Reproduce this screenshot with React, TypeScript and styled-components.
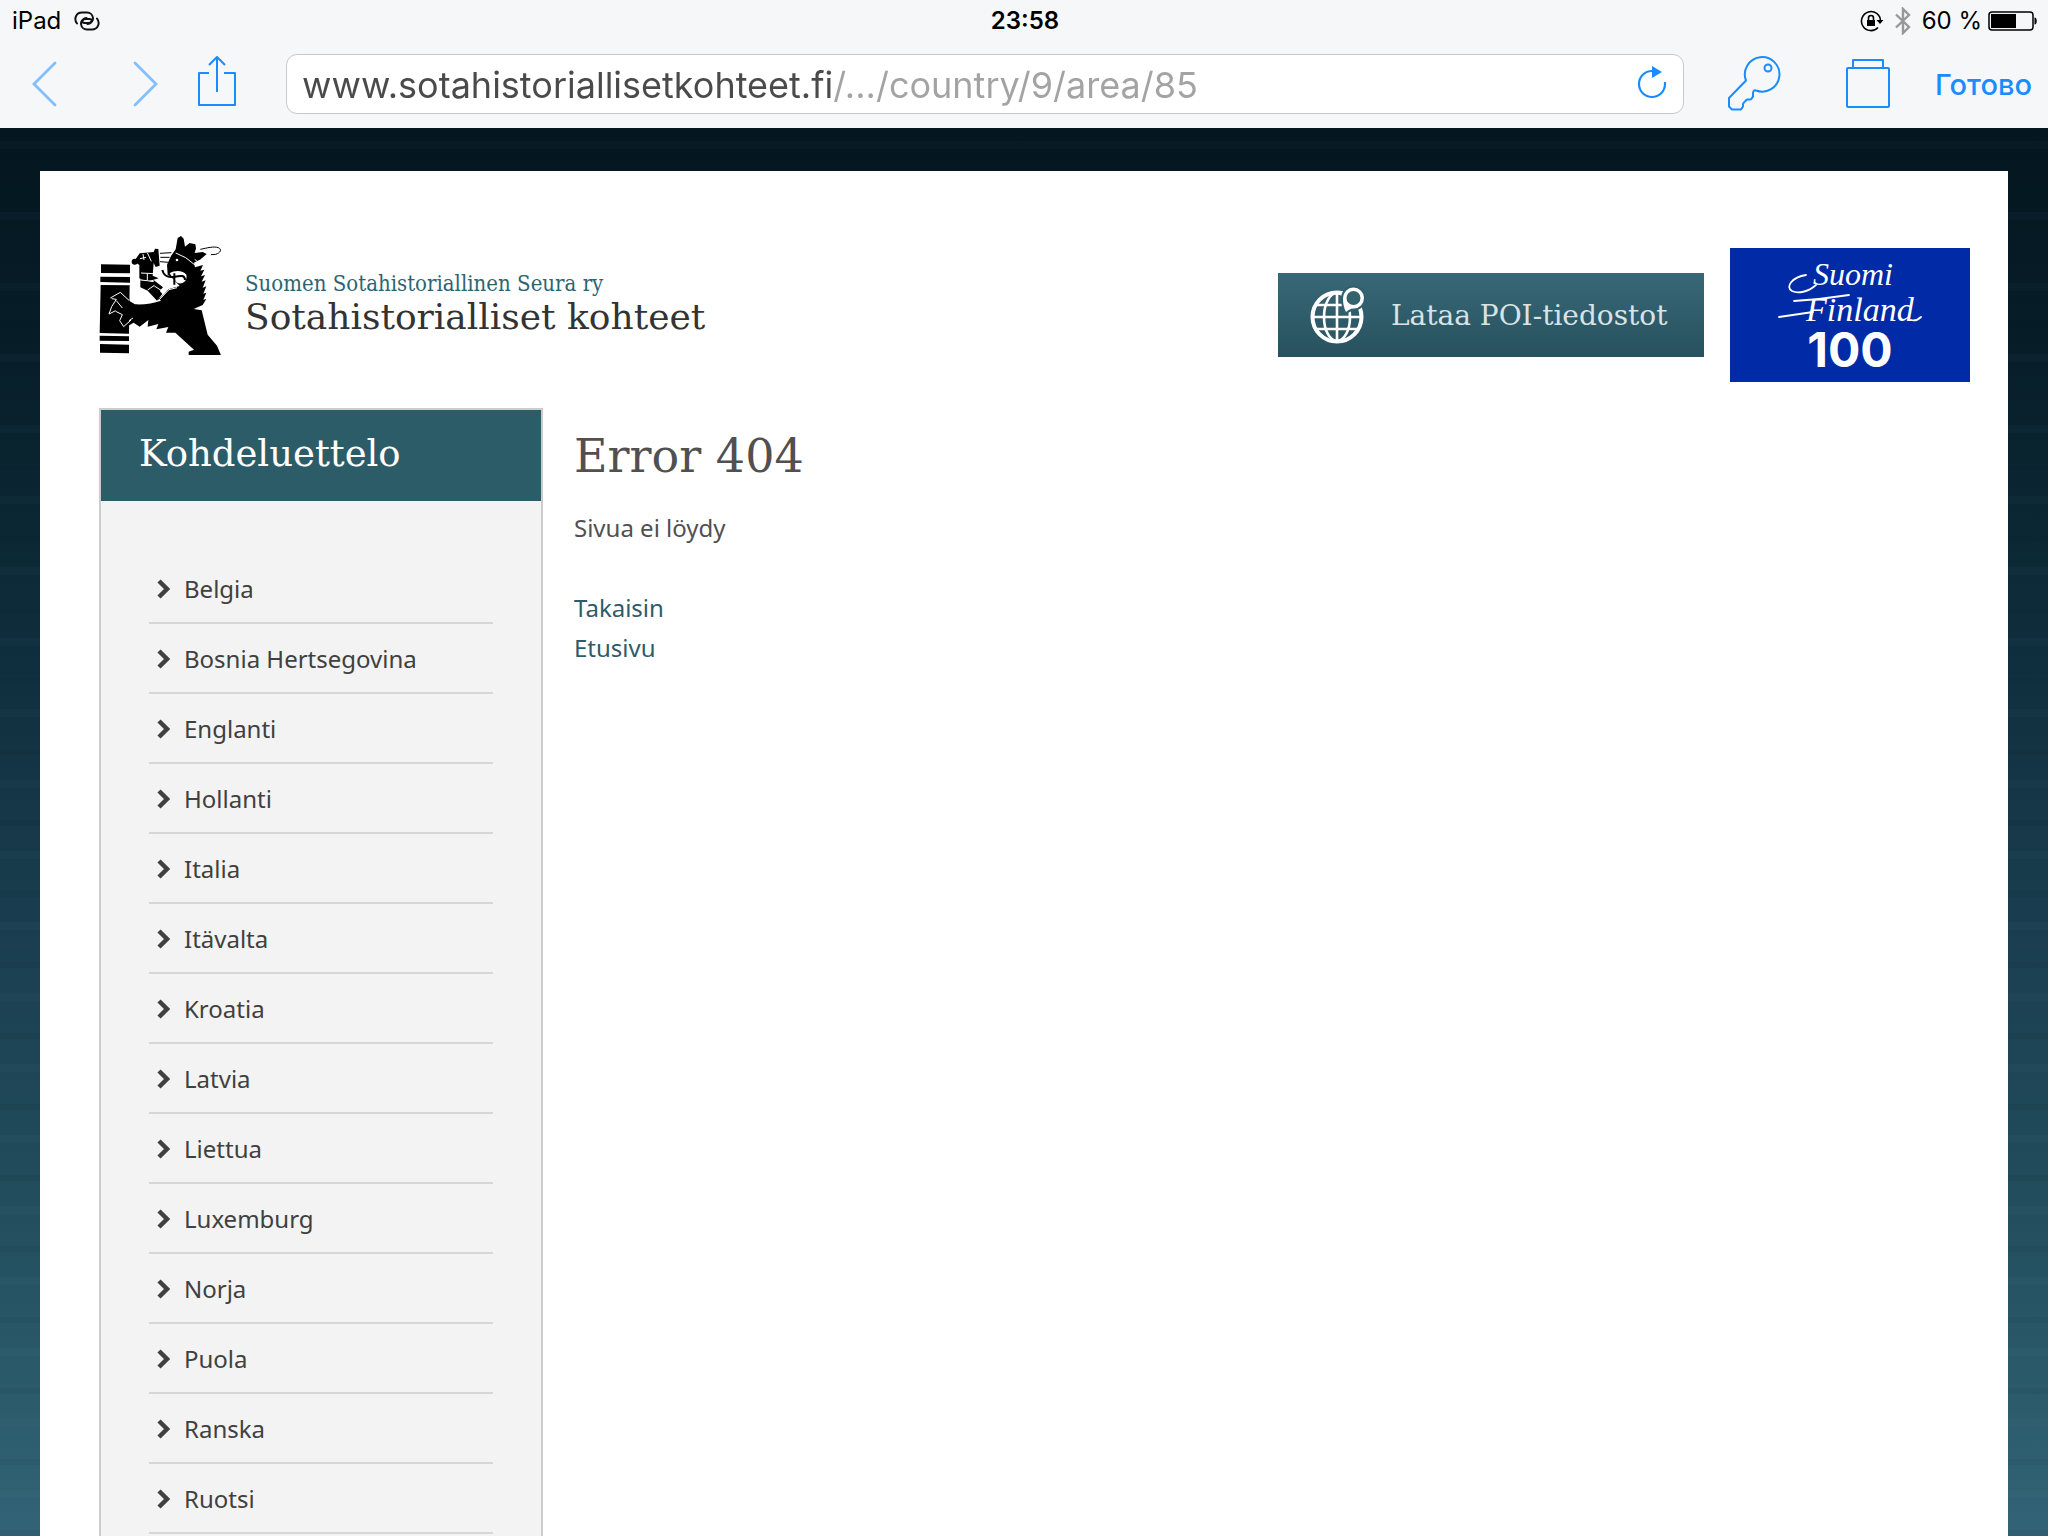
import React from "react";
import styled, { createGlobalStyle } from "styled-components";

const ui = `Inter, Roboto, "Liberation Sans", sans-serif`;
const body = `"Noto Sans", "Open Sans", sans-serif`;
const serif = `"DejaVu Serif", "Liberation Serif", serif`;
const serifNarrow = `"DejaVu Serif Condensed", "DejaVu Serif", serif`;
const blue = "#1a8cff";

const GlobalStyle = createGlobalStyle`
  * { box-sizing: border-box; }
  html, body { height: 100%; overflow: hidden; }
  body { margin: 0; background: #f5f7f9; }
  #root { height: 100%; }
  button, input { font: inherit; }
  button { border: 0; padding: 0; background: none; color: inherit; }
  a { text-decoration: none; }
  svg { display: block; flex: none; }
`;

const Screen = styled.div`
  display: flex;
  flex-direction: column;
  height: 100vh;
`;

/* Browser chrome */
const Chrome = styled.header`
  flex: none;
  height: 128px;
  font-family: ${ui};
  background: #f5f7f9;
`;

const StatusBar = styled.div`
  display: grid;
  grid-template-columns: 1fr auto 1fr;
  align-items: center;
  height: 40px;
  padding: 2px 10px 0 12px;
  font-size: 24px;
  line-height: 28px;
  color: #000;
`;

const StatusGroup = styled.div<{ $gap: number; $end?: boolean }>`
  display: flex;
  align-items: center;
  justify-content: ${(p) => (p.$end ? "flex-end" : "flex-start")};
  gap: ${(p) => p.$gap}px;
`;

const Clock = styled.time`
  font-weight: 600;
`;

const Toolbar = styled.nav`
  display: flex;
  align-items: center;
  height: 88px;
  padding: 0 16px 0 32px;
`;

const NavButtons = styled.div`
  display: flex;
  align-items: center;
  width: 254px;
`;

const IconButton = styled.button<{ $gap: number }>`
  display: flex;
  margin-right: ${(p) => p.$gap}px;
`;

const AddressBar = styled.div`
  flex: 1;
  display: flex;
  align-items: center;
  height: 60px;
  padding: 0 14px 0 15px;
  border: 1px solid #c8c9cb;
  border-radius: 11px;
  background: #fff;
`;

const AddressInput = styled.input`
  flex: 1;
  min-width: 0;
  height: 58px;
  padding: 2px 0 0;
  border: 0;
  outline: 0;
  font-size: 36px;
  color: transparent;
  background: linear-gradient(90deg, #4a4a4a 531px, #a3a3a3 531px);
  background-clip: text;
  -webkit-background-clip: text;
`;

const Actions = styled.div`
  display: flex;
  align-items: center;
  padding-left: 43px;
`;

const DoneButton = styled.button`
  padding-top: 2px;
  font-size: 29px;
  line-height: 40px;
  font-weight: 500;
  color: ${blue};
`;

/* Web page */
const Page = styled.div`
  flex: 1;
  min-height: 0;
  display: flex;
  padding: 43px 40px 0;
  background:
    repeating-linear-gradient(0deg, rgba(0, 20, 30, 0.06) 0 6px, transparent 6px 38px, rgba(120, 170, 190, 0.03) 38px 46px, transparent 46px 71px),
    linear-gradient(180deg, #04161f 0%, #061d28 15%, #0e2c3a 35%, #1a3e50 57%, #214c5b 75%, #2b5b6b 90%, #326376 100%);
`;

const Sheet = styled.div`
  flex: 1;
  min-width: 0;
  padding: 64px 38px 0 59px;
  background: #fff;
`;

const SiteHeader = styled.div`
  display: flex;
  align-items: flex-start;
  justify-content: space-between;
`;

const Brand = styled.a`
  display: flex;
  align-items: center;
  gap: 23px;
`;

const BrandText = styled.span`
  display: flex;
  flex-direction: column;
  padding-top: 18px;
`;

const BrandOwner = styled.span`
  font-family: ${serifNarrow};
  font-size: 22px;
  line-height: 26px;
  color: #2d6473;
`;

const BrandName = styled.span`
  font-family: ${serif};
  font-size: 36px;
  line-height: 40px;
  color: #333;
`;

const Banners = styled.div`
  display: flex;
  align-items: center;
  gap: 26px;
  padding-top: 13px;
`;

const PoiLink = styled.a`
  display: flex;
  align-items: center;
  gap: 26px;
  width: 426px;
  height: 84px;
  padding-left: 31px;
  font-family: ${serif};
  font-size: 28px;
  color: #d9e3e6;
  background: linear-gradient(180deg, #386877, #27515e);
`;

const Columns = styled.div`
  display: flex;
  align-items: flex-start;
  gap: 31px;
  padding-top: 26px;
`;

const Sidebar = styled.aside`
  flex: none;
  width: 444px;
  border: 2px solid #ccc;
  background: #f3f3f3;
`;

const SidebarTitle = styled.h2`
  margin: 0;
  height: 91px;
  padding-left: 38px;
  font-family: ${serif};
  font-size: 37px;
  line-height: 88px;
  font-weight: 400;
  color: #fff;
  background: #2d5c69;
`;

const CountryList = styled.ul`
  margin: 0;
  padding: 53px 48px 40px;
  list-style: none;
`;

const CountryItem = styled.li`
  border-bottom: 2px solid #d6d6d6;
`;

const CountryLink = styled.a`
  display: flex;
  align-items: center;
  gap: 14px;
  height: 68px;
  padding-left: 8px;
  font-family: ${body};
  font-size: 24px;
  color: #404040;
`;

const Main = styled.main`
  flex: 1;
  font-family: ${body};
  font-size: 24px;
  line-height: 40px;
  color: #505050;
`;

const Title = styled.h1`
  margin: 0;
  padding: 16px 0 20px;
  font-family: ${serif};
  font-size: 46px;
  line-height: 64px;
  font-weight: 400;
`;

const Message = styled.p`
  margin: 0 0 40px;
`;

const TextLink = styled.a`
  display: block;
  color: #2d5c69;
`;

const countries = [
  "Belgia", "Bosnia Hertsegovina", "Englanti", "Hollanti", "Italia", "Itävalta", "Kroatia",
  "Latvia", "Liettua", "Luxemburg", "Norja", "Puola", "Ranska", "Ruotsi",
];

const HotspotIcon = () => (
  <svg width="26" height="20" viewBox="0 0 26 20" fill="none" stroke="#111" strokeWidth="2" strokeLinecap="round">
    <path d="M3 12.500C-.5 8 2 1.500 8 1.500h5c7 0 8.500 10.500 1 10.500h-3.500c-3 0-3-3 0-4.500l2-.5" />
    <path d="M23 7.500c3.500 4.500 1 11-5 11h-5C6 18.500 4.500 8 12 8h3.500c3 0 3 3 0 4.500l-2 .5" />
  </svg>
);

const RotationLockIcon = () => (
  <svg width="24" height="22" viewBox="0 0 24 22" fill="none" stroke="#000" strokeWidth="1.600">
    <path d="M18 17.500a9.500 9.500 0 1 1 2.500-6.500" />
    <path d="M16.500 10h7l-3.500 4z" fill="#000" stroke="none" />
    <path d="M8.500 11V8a2.500 2.500 0 0 1 5 0v3" />
    <rect x="7" y="10" width="8" height="6" fill="#000" stroke="none" />
  </svg>
);

const BluetoothIcon = () => (
  <svg width="16" height="28" viewBox="0 0 16 28" fill="none" stroke="#97989a" strokeWidth="2.400">
    <path d="M1 7.500l13 12.500-6 6V2l6 6L1 20.500" />
  </svg>
);

const BatteryIcon = () => (
  <svg width="50" height="20" viewBox="0 0 50 20">
    <rect x="1" y="1" width="44" height="18" rx="3" fill="none" stroke="#000" strokeWidth="1.500" />
    <rect x="3" y="3" width="25" height="14" fill="#000" />
    <path d="M46.500 6.500c3 0 3 7 0 7z" fill="#000" />
  </svg>
);

const ArrowIcon = ({ flip }: { flip?: boolean }) => (
  <svg width="25" height="46" viewBox="0 0 25 46" fill="none" stroke="#83bffd" strokeWidth="2.800" strokeLinecap="round">
    <path d={flip ? "M2 2l21 21L2 44" : "M23 2L2 23l21 21"} />
  </svg>
);

const ShareIcon = () => (
  <svg width="40" height="58" viewBox="0 0 40 58" fill="none" stroke={blue} strokeWidth="2" strokeLinejoin="round">
    <path d="M12 18H2v32h36V18H27M20 37V3M12 10l8-8 8 8" />
  </svg>
);

const ReloadIcon = () => (
  <svg width="32" height="38" viewBox="0 0 32 38" fill="none" stroke={blue} strokeWidth="2.200">
    <path d="M15 6a13 13 0 1 0 13 13v-2" />
    <path d="M15 1l10 6-10 6z" fill={blue} stroke="none" />
  </svg>
);

const KeyIcon = () => (
  <svg width="54" height="58" viewBox="0 0 54 58" fill="none" stroke={blue} strokeWidth="2" strokeLinejoin="round">
    <path d="M19 25.500A17.300 17.300 0 1 1 29 35.500c-2-1-3 1-3 3v3c-1 1-1 3-3 3h-3c-2 2-4 3-4 5v2l-2 3H5l-3-3V43z" />
    <circle cx="41" cy="13" r="3.500" />
  </svg>
);

const TabsIcon = () => (
  <svg width="46" height="52" viewBox="0 0 46 52" fill="none" stroke={blue} strokeWidth="2" strokeLinejoin="round">
    <rect x="2" y="10" width="42" height="39" rx="1" />
    <path d="M8 10V2h30v8" />
  </svg>
);

const LionLogo = () => (
  <svg width="123" height="120" viewBox="60 43 369 360" role="img" aria-label="Sotahistoriallinen Seura">
    <g fill="#000">
      <path d="M66 131l87 1v26l-87-1zM64 168l89 1v17l-89-2zM65 193l87 1-2 145-88-2zM62 345l88 2v14l-88-1zM63 370l87 2v26l-87-2z" />
      <path d="M128 226l22 14 18 11c28 2 55-4 78-11l-10-8c18 6 20-20 36-28l30-8-20-22-16-12-2-30 12-26 14-20 6-34 10-6 8 8 4 24 14-11 17 4 2 12-4 14 24-3 12 6-18 16-20 10 3 14 24-7-8 17 12-3-10 20 12-4-10 20 12-4-9 22 11-4-9 22 9-3-9 21 9-2-11 18-27 12 24 4 18 73 28 33 12 29h-97v-11l16-6-56-51-28 0 7-17-36 7 6-16-32 8 2-20-26 20-18-12-24 14-14-40z" />
      <circle cx="167" cy="123" r="9" />
      <path d="M168 118l14-20 42-4 4-10 10 1 4 50-12 4-6-12-3 38 18 8-36 10-22-10 0-40-12-8z" />
      <path d="M184 176l38 8 2-6 28 22-10 10 8 10-16 20-28-30-22-10z" />
      <path d="M270 207c-12 12-24 20-34 32l40-8 28-30z" />
    </g>
    <g fill="none" stroke="#fff" strokeWidth="3">
      <path d="M186 157l38 2M184 178l40 4M205 158v20M206 208l20-14M226 196l22 14M183 114l18-4M205 96l12 26M192 100l3 18" />
      <path d="M238 240l32-33 24-6M290 97l30 14 28 22M347 116l12 10M258 108l16-1" />
      <path d="M94 232l30-17 26 24M98 234l14 2-14 22-8 22 20-10M112 240l18 22M110 272l20 10-8 18 12 18 22-20M150 300l12-8" />
    </g>
    <g fill="none" stroke="#000" strokeWidth="3">
      <path d="M243 98l34-2M244 110h28M243 123l26 2M364 86c20-4 40-10 54-5 12 5 6 16-8 20l-14 1" />
    </g>
    <path d="M272 158c14-10 40-10 50 4 4 16-8 28-22 26-10-2-10-10-20-18z" fill="#fff" />
    <path d="M250 148c4 18 20 24 38 20s30-4 30 10M286 158v34" fill="none" stroke="#000" strokeWidth="6" />
    <circle cx="294" cy="118" r="4" fill="#fff" />
  </svg>
);

const pin = "M37 28C34.500 23 34 19 34 14a10.500 10.500 0 1 1 11 10.500c-4 0-6 2-8 3.500z";

const GlobeIcon = () => (
  <svg width="56" height="62" viewBox="0 0 56 62" fill="none" stroke="#fff">
    <circle cx="28" cy="33" r="24.500" strokeWidth="4" />
    <path d="M28 9v48M5 33h46M8 21h40M8 45h40" strokeWidth="2.600" />
    <ellipse cx="28" cy="33" rx="13" ry="24" strokeWidth="2.600" />
    <path d={pin} fill="#2f6070" stroke="#2f6070" strokeWidth="4" />
    <path d={pin} fill="#fff" stroke="none" />
    <circle cx="44.500" cy="14" r="7" fill="#34636f" stroke="none" />
  </svg>
);

const FinlandLogo = () => (
  <svg width="240" height="134" viewBox="0 0 240 134" role="img" aria-label="Suomi Finland 100">
    <rect width="240" height="134" fill="#002aa6" />
    <g fill="#fff" fontFamily='"Liberation Serif", serif' fontStyle="italic">
      <text x="83" y="37" fontSize="32">Suomi</text>
      <text x="76" y="73" fontSize="34">Finland</text>
    </g>
    <g fill="none" stroke="#fff" strokeWidth="1.800" strokeLinecap="round">
      <path d="M76 27c-14 2-21 12-14 16 6 3 16 1 24-6M64 53c16-1 36-3 55-6M49 69l34-5M181 72c4 1 7 0 10-3" />
    </g>
    <text x="120" y="119" fill="#fff" fontFamily="Inter, sans-serif" fontWeight="700" fontSize="48" textAnchor="middle">100</text>
  </svg>
);

const Chevron = () => (
  <svg width="13" height="22" viewBox="0 0 13 22" fill="none" stroke="#404040" strokeWidth="4.500">
    <path d="M2 4l8 8-8 8" />
  </svg>
);

export default function App() {
  return (
    <Screen>
      <GlobalStyle />
      <Chrome>
        <StatusBar>
          <StatusGroup $gap={13}>
            <span>iPad</span>
            <HotspotIcon />
          </StatusGroup>
          <Clock>23:58</Clock>
          <StatusGroup $gap={11} $end>
            <RotationLockIcon />
            <BluetoothIcon />
            <StatusGroup $gap={6}>
              <span>60 %</span>
              <BatteryIcon />
            </StatusGroup>
          </StatusGroup>
        </StatusBar>
        <Toolbar aria-label="Browser">
          <NavButtons>
            <IconButton $gap={76} aria-label="Back"><ArrowIcon /></IconButton>
            <IconButton $gap={39} aria-label="Forward"><ArrowIcon flip /></IconButton>
            <IconButton $gap={0} aria-label="Share"><ShareIcon /></IconButton>
          </NavButtons>
          <AddressBar>
            <AddressInput aria-label="Address" readOnly value="www.sotahistoriallisetkohteet.fi/.../country/9/area/85" />
            <IconButton $gap={0} aria-label="Reload"><ReloadIcon /></IconButton>
          </AddressBar>
          <Actions>
            <IconButton $gap={64} aria-label="Passwords"><KeyIcon /></IconButton>
            <IconButton $gap={44} aria-label="Tabs"><TabsIcon /></IconButton>
            <DoneButton>Готово</DoneButton>
          </Actions>
        </Toolbar>
      </Chrome>
      <Page>
        <Sheet>
          <SiteHeader>
            <Brand href="#">
              <LionLogo />
              <BrandText>
                <BrandOwner>Suomen Sotahistoriallinen Seura ry</BrandOwner>
                <BrandName>Sotahistorialliset kohteet</BrandName>
              </BrandText>
            </Brand>
            <Banners>
              <PoiLink href="#"><GlobeIcon />Lataa POI-tiedostot</PoiLink>
              <a href="#"><FinlandLogo /></a>
            </Banners>
          </SiteHeader>
          <Columns>
            <Sidebar>
              <SidebarTitle>Kohdeluettelo</SidebarTitle>
              <CountryList>
                {countries.map((name) => (
                  <CountryItem key={name}>
                    <CountryLink href="#"><Chevron />{name}</CountryLink>
                  </CountryItem>
                ))}
              </CountryList>
            </Sidebar>
            <Main>
              <Title>Error 404</Title>
              <Message>Sivua ei löydy</Message>
              <TextLink href="#">Takaisin</TextLink>
              <TextLink href="#">Etusivu</TextLink>
            </Main>
          </Columns>
        </Sheet>
      </Page>
    </Screen>
  );
}
